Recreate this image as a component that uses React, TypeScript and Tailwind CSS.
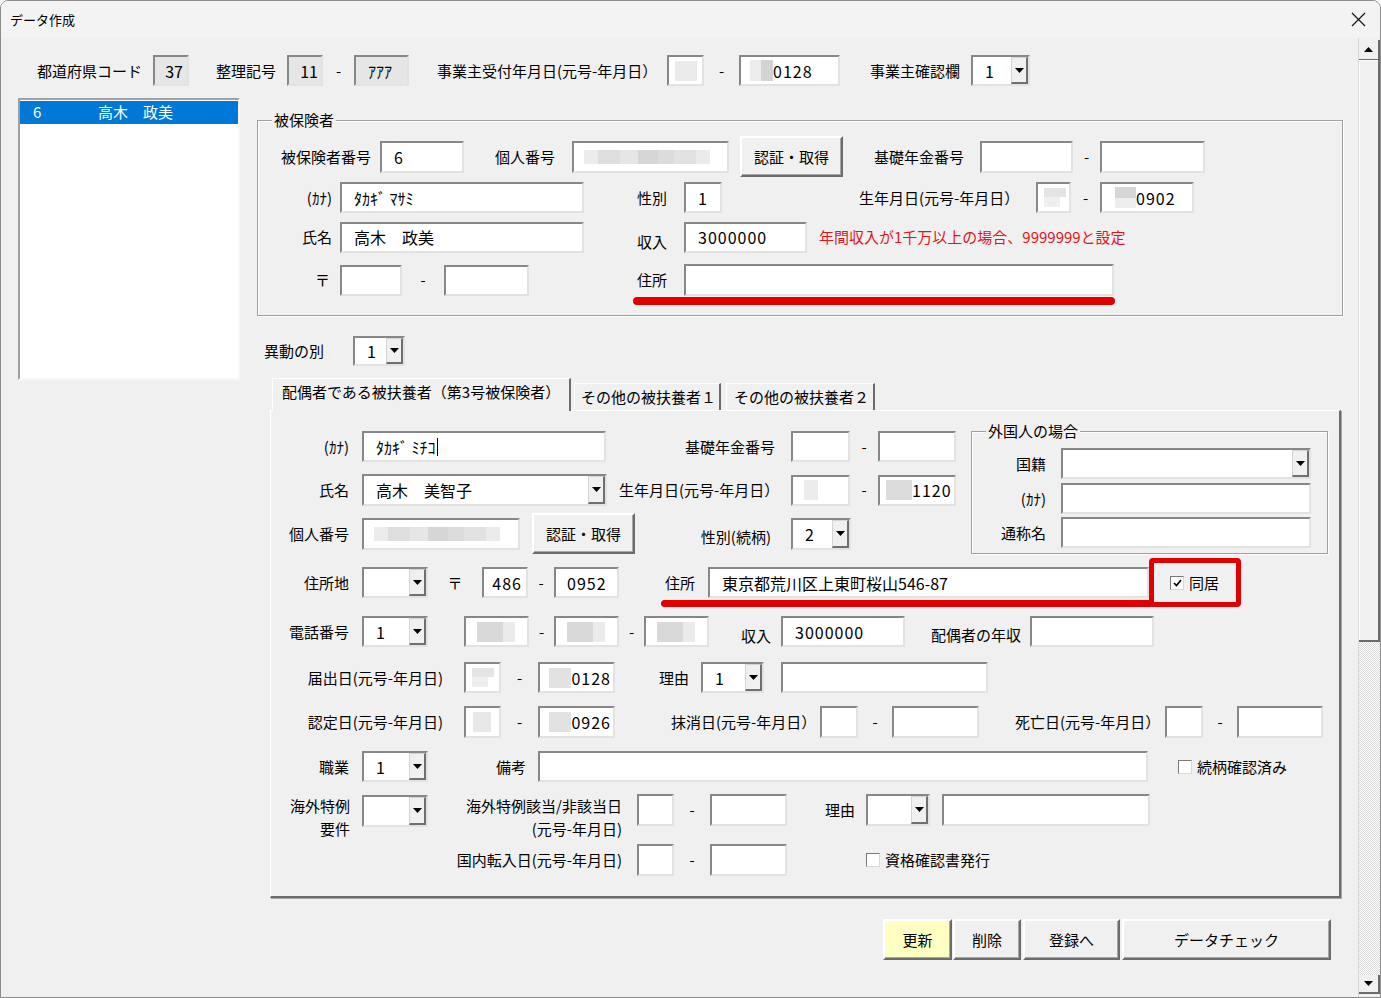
import React from 'react';

type P = { c?: string; children?: React.ReactNode };

function L({ c = '', children }: P) {
  return <div className={`shrink-0 whitespace-nowrap text-[15px] leading-[20px] ${c}`}>{children}</div>;
}

function Dash({ c = '' }: { c?: string }) {
  return <div className={`shrink-0 text-center text-[15px] leading-[20px] ${c}`}>-</div>;
}

function Field({ c = '', gray = false, children }: P & { gray?: boolean }) {
  return (
    <div
      className={`flex shrink-0 items-center overflow-hidden whitespace-nowrap border-2 border-t-[#878787] border-l-[#878787] border-r-[#e2e2e2] border-b-[#e2e2e2] text-[16px] leading-[20px] ${c.includes('h-[') ? '' : 'h-[31px]'} ${gray ? 'bg-[#e6e6e6]' : 'bg-white'} ${c}`}
    >
      {children}
    </div>
  );
}

function Tri({ up = false }: { up?: boolean }) {
  return (
    <svg width="9" height="5" viewBox="0 0 9 5">
      <path d={up ? 'M0 5h9L4.5 0z' : 'M0 0h9L4.5 5z'} fill="#000" />
    </svg>
  );
}

function Combo({ c = '', v = '' }: { c?: string; v?: string }) {
  return (
    <Field c={c}>
      <span className="flex-1 pl-[12px]">{v}</span>
      <span className="flex h-full w-[17px] shrink-0 items-center justify-center border-l border-t border-l-[#d4d4d4] border-t-[#d4d4d4] border-r-2 border-b-2 border-r-[#6f6f6f] border-b-[#6f6f6f] bg-[#f0f0f0]">
        <Tri />
      </span>
    </Field>
  );
}

function Btn({ c = '', children }: P) {
  return (
    <div className={`flex shrink-0 items-center justify-center border-2 border-t-white border-l-white border-r-[#6b6b6b] border-b-[#6b6b6b] text-[15px] leading-[20px] shadow-[inset_-1px_-1px_0_#a8a8a8] ${c}`}>
      {children}
    </div>
  );
}

function Check({ c = '', on = false, children }: P & { on?: boolean }) {
  return (
    <div className={`flex shrink-0 items-center gap-[5px] text-[15px] leading-[20px] ${c}`}>
      <span className="flex h-[14px] w-[14px] items-center justify-center border border-t-[#7a7a7a] border-l-[#7a7a7a] border-r-[#d8d8d8] border-b-[#d8d8d8] bg-white">
        {on && (
          <svg width="9" height="8" viewBox="0 0 9 8">
            <path d="M1 4l2.5 2.5L8 1" stroke="#000" strokeWidth="1.7" fill="none" />
          </svg>
        )}
      </span>
      {children}
    </div>
  );
}

function Frame({ c = '', title, children }: P & { title: string }) {
  return (
    <div className={`relative shrink-0 border border-[#a0a0a0] shadow-[inset_1px_1px_0_#ffffff,1px_1px_0_#ffffff] ${c}`}>
      <span className="absolute left-[14px] top-[-11px] bg-[#f0f0f0] px-[2px] text-[15px] leading-[20px]">{title}</span>
      {children}
    </div>
  );
}

// pixelated (masked) content inside inputs
function Smudge({ c = '' }: { c?: string }) {
  return <span className={`block shrink-0 ${c}`} />;
}

function DateHead() {
  return (
    <div className="ml-[6px] flex flex-col">
      <Smudge c="h-[9px] w-[22px] bg-[#e4e4e4]" />
      <Smudge c="h-[10px] w-[16px] bg-[#efefef]" />
    </div>
  );
}

function MyNumber() {
  return (
    <div className="ml-[10px] flex h-[14px]">
      <Smudge c="w-[14px] bg-[#ececec]" />
      <Smudge c="w-[22px] bg-[#dedede]" />
      <Smudge c="w-[18px] bg-[#e6e6e6]" />
      <Smudge c="w-[20px] bg-[#d6d6d6]" />
      <Smudge c="w-[16px] bg-[#dcdcdc]" />
      <Smudge c="w-[22px] bg-[#e2e2e2]" />
      <Smudge c="w-[14px] bg-[#ebebeb]" />
    </div>
  );
}

function Phone() {
  return (
    <div className="ml-[11px] flex h-[20px]">
      <Smudge c="w-[26px] bg-[#d9d9d9]" />
      <Smudge c="w-[12px] bg-[#ebebeb]" />
    </div>
  );
}

export default function App() {
  return (
    <div className="h-[998px] w-[1381px] overflow-hidden rounded-t-[8px] border border-[#8c8c8c] bg-[#f0f0f0] font-['Noto_Sans_CJK_JP','Noto_Sans',sans-serif] text-black">
      {/* title bar */}
      <div className="flex h-[37px] items-center justify-between bg-[#f3f3f3]">
        <span className="pl-[9px] text-[13px]">データ作成</span>
        <svg className="mr-[14px]" width="15" height="15" viewBox="0 0 15 15">
          <path d="M1 1l13 13M14 1L1 14" stroke="#1a1a1a" strokeWidth="1.3" />
        </svg>
      </div>

      <div className="flex h-[959px]">
        <div className="w-[1357px] shrink-0">
          {/* header row */}
          <div className="mt-[17px] flex h-[31px] items-center">
            <L c="ml-[36px] w-[105px]">都道府県コード</L>
            <Field gray c="ml-[11px] w-[36px] justify-end pr-[4px]">37</Field>
            <L c="ml-[27px] w-[60px]">整理記号</L>
            <Field gray c="ml-[11px] w-[36px] justify-end pr-[3px]">11</Field>
            <Dash c="w-[31px]" />
            <Field gray c="w-[55px] pl-[12px] text-[14px]">ｱｱｱ</Field>
            <L c="ml-[28px] w-[214px]">事業主受付年月日(元号-年月日）</L>
            <Field c="ml-[16px] w-[37px]">
              <Smudge c="ml-[6px] h-[20px] w-[22px] bg-[#ebebeb]" />
            </Field>
            <Dash c="w-[35px]" />
            <Field c="w-[101px]">
              <Smudge c="ml-[9px] h-[21px] w-[11px] bg-[#ededed]" />
              <Smudge c="h-[21px] w-[12px] bg-[#d3d3d3]" />
              <span className="tracking-[1px]">0128</span>
            </Field>
            <L c="ml-[30px] w-[90px]">事業主確認欄</L>
            <Combo c="ml-[11px] w-[59px]" v="1" />
          </div>

          <div className="mt-[12px] flex items-start">
            {/* list */}
            <div className="ml-[17px] h-[282px] w-[222px] shrink-0 border-2 border-t-[#a0a0a0] border-l-[#a0a0a0] border-r-[#f7f7f7] border-b-[#f7f7f7] bg-white">
              <div className="mt-[1px] flex h-[23px] items-center bg-[#0078d7] text-[15px] text-white">
                <span className="w-[78px] pl-[13px]">6</span>
                <span>高木　政美</span>
              </div>
            </div>

            {/* right side */}
            <div className="ml-[17px] w-[1100px] shrink-0">
              <Frame c="mt-[22px] h-[196px] w-[1086px]" title="被保険者">
                <div className="mt-[15px] flex h-[41px] items-center">
                  <L c="ml-[23px] w-[90px]">被保険者番号</L>
                  <Field c="ml-[9px] h-[32px] w-[84px] pl-[12px]">6</Field>
                  <L c="ml-[31px] w-[60px]">個人番号</L>
                  <Field c="ml-[17px] h-[32px] w-[157px]">
                    <MyNumber />
                  </Field>
                  <Btn c="ml-[11px] h-[41px] w-[103px]">認証・取得</Btn>
                  <L c="ml-[31px] w-[90px]">基礎年金番号</L>
                  <Field c="ml-[16px] h-[32px] w-[93px]" />
                  <Dash c="w-[27px]" />
                  <Field c="h-[32px] w-[105px]" />
                </div>
                <div className="mt-[5px] flex h-[31px] items-center">
                  <L c="w-[74px] text-right">(ｶﾅ)</L>
                  <Field c="ml-[8px] w-[244px] pl-[12px] text-[15px]">ﾀｶｷﾞ ﾏｻﾐ</Field>
                  <L c="ml-[53px] w-[30px]">性別</L>
                  <Field c="ml-[17px] w-[38px] pl-[12px]">1</Field>
                  <L c="ml-[137px] w-[155px]">生年月日(元号-年月日）</L>
                  <Field c="ml-[22px] w-[35px]">
                    <DateHead />
                  </Field>
                  <Dash c="w-[29px]" />
                  <Field c="w-[94px]">
                    <div className="ml-[13px] flex flex-col">
                      <Smudge c="h-[11px] w-[21px] bg-[#d6d6d6]" />
                      <Smudge c="h-[10px] w-[21px] bg-[#eeeeee]" />
                    </div>
                    <span className="tracking-[1px]">0902</span>
                  </Field>
                </div>
                <div className="mt-[8px] flex h-[32px] items-center">
                  <L c="w-[74px] text-right">氏名</L>
                  <Field c="ml-[8px] w-[244px] pl-[12px]">高木　政美</Field>
                  <L c="ml-[53px] mt-[10px] w-[30px]">収入</L>
                  <Field c="ml-[17px] w-[123px] pl-[12px] tracking-[1px]">3000000</Field>
                  <L c="ml-[12px] text-[#e3141c]">年間収入が1千万以上の場合、9999999と設定</L>
                </div>
                <div className="mt-[11px] flex h-[32px] items-center">
                  <L c="w-[74px] pr-[2px] text-right">〒</L>
                  <Field c="ml-[8px] w-[62px]" />
                  <Dash c="w-[42px]" />
                  <Field c="w-[85px]" />
                  <div className="relative ml-[108px] flex items-center">
                    <L c="w-[30px]">住所</L>
                    <Field c="ml-[17px] h-[32px] w-[430px]" />
                    <span className="absolute left-[-4px] top-[33px] h-[8px] w-[482px] rounded-full bg-[#e00000]" />
                  </div>
                </div>
              </Frame>

              <div className="mt-[20px] flex h-[30px] items-center">
                <L c="ml-[7px] w-[60px]">異動の別</L>
                <Combo c="ml-[29px] h-[30px] w-[52px]" v="1" />
              </div>

              {/* tabs */}
              <div className="mt-[12px] flex h-[32px] items-end">
                <div className="relative z-10 -mb-[1px] ml-[15px] flex h-[33px] w-[299px] items-start border-l border-t border-l-white border-t-white border-r-2 border-r-[#6b6b6b] bg-[#f0f0f0] pl-[9px] pt-[3px] text-[15px] leading-[20px]">
                  配偶者である被扶養者（第3号被保険者）
                </div>
                <div className="ml-[3px] flex h-[27px] w-[147px] items-center border-l border-t border-l-white border-t-white border-r-2 border-r-[#6b6b6b] pl-[6px] text-[15px]">
                  その他の被扶養者１
                </div>
                <div className="ml-[5px] flex h-[27px] w-[149px] items-center border-l border-t border-l-white border-t-white border-r-2 border-r-[#6b6b6b] pl-[7px] text-[15px]">
                  その他の被扶養者２
                </div>
              </div>

              <div className="ml-[13px] h-[488px] w-[1071px] border-l border-t border-l-white border-t-white border-r-2 border-b-2 border-r-[#6b6b6b] border-b-[#6b6b6b] shadow-[1px_1px_0_#a8a8a8]">
                <div className="flex items-start">
                  <div className="w-[685px] shrink-0">
                    <div className="mt-[20px] flex h-[31px] items-center">
                      <L c="w-[78px] text-right">(ｶﾅ)</L>
                      <Field c="ml-[13px] w-[244px] pl-[12px] text-[15px]">
                        ﾀｶｷﾞ ﾐﾁｺ<span className="ml-[1px] inline-block h-[18px] w-[1px] bg-black" />
                      </Field>
                      <L c="ml-[79px] w-[90px]">基礎年金番号</L>
                      <Field c="ml-[16px] w-[59px]" />
                      <Dash c="w-[28px]" />
                      <Field c="w-[78px]" />
                    </div>
                    <div className="mt-[12px] flex h-[32px] items-center">
                      <L c="w-[78px] text-right">氏名</L>
                      <Combo c="ml-[13px] h-[32px] w-[245px]" v="高木　美智子" />
                      <L c="ml-[12px] w-[156px]">生年月日(元号-年月日）</L>
                      <Field c="ml-[16px] w-[59px]">
                        <Smudge c="ml-[11px] h-[20px] w-[14px] bg-[#ececec]" />
                      </Field>
                      <Dash c="w-[28px]" />
                      <Field c="w-[78px]">
                        <Smudge c="ml-[6px] h-[20px] w-[26px] bg-[#dcdcdc]" />
                        <span className="tracking-[1px]">1120</span>
                      </Field>
                    </div>
                    <div className="mt-[7px] flex h-[41px] items-center">
                      <L c="w-[78px] text-right">個人番号</L>
                      <Field c="ml-[13px] h-[32px] w-[158px]">
                        <MyNumber />
                      </Field>
                      <Btn c="ml-[12px] h-[41px] w-[103px]">認証・取得</Btn>
                      <L c="mt-[6px] w-[136px] text-right">性別(続柄)</L>
                      <Combo c="ml-[20px] h-[32px] w-[60px]" v="2" />
                    </div>
                  </div>

                  <Frame c="ml-[15px] mt-[20px] h-[123px] w-[357px]" title="外国人の場合">
                    <div className="mt-[16px] flex h-[31px] items-center">
                      <L c="w-[74px] text-right">国籍</L>
                      <Combo c="ml-[15px] w-[250px]" />
                    </div>
                    <div className="mt-[4px] flex h-[31px] items-center">
                      <L c="w-[74px] text-right">(ｶﾅ)</L>
                      <Field c="ml-[15px] w-[250px]" />
                    </div>
                    <div className="mt-[3px] flex h-[31px] items-center">
                      <L c="w-[74px] text-right">通称名</L>
                      <Field c="ml-[15px] w-[250px]" />
                    </div>
                  </Frame>
                </div>

                {/* 住所地 */}
                <div className="mt-[4px] flex h-[49px] items-center">
                  <L c="w-[78px] text-right">住所地</L>
                  <Combo c="ml-[13px] w-[66px]" />
                  <L c="w-[54px] text-center">〒</L>
                  <Field c="w-[46px] justify-end pr-[4px] tracking-[1px]">486</Field>
                  <Dash c="w-[26px]" />
                  <Field c="w-[65px] pl-[11px] tracking-[1px]">0952</Field>
                  <div className="relative ml-[46px] flex items-center">
                    <L c="w-[30px]">住所</L>
                    <Field c="ml-[13px] w-[441px] pl-[12px]">東京都荒川区上東町桜山546-87</Field>
                    <span className="absolute left-[-4px] top-[33px] h-[7px] w-[490px] rounded-l-full bg-[#e00000]" />
                  </div>
                  <div className="flex h-[49px] w-[92px] shrink-0 items-center rounded-[4px] border-[5px] border-[#e00000]">
                    <Check on c="ml-[16px]">同居</Check>
                  </div>
                </div>

                {/* 電話番号 */}
                <div className="mt-[9px] flex h-[31px] items-center">
                  <L c="w-[78px] text-right">電話番号</L>
                  <Combo c="ml-[13px] w-[66px]" v="1" />
                  <Field c="ml-[36px] w-[65px]">
                    <Phone />
                  </Field>
                  <Dash c="w-[25px]" />
                  <Field c="w-[65px]">
                    <Phone />
                  </Field>
                  <Dash c="w-[25px]" />
                  <Field c="w-[65px]">
                    <Phone />
                  </Field>
                  <L c="ml-[32px] mt-[8px] w-[30px]">収入</L>
                  <Field c="ml-[10px] w-[124px] pl-[12px] tracking-[1px]">3000000</Field>
                  <L c="ml-[26px] mt-[6px] w-[90px]">配偶者の年収</L>
                  <Field c="ml-[9px] w-[124px]" />
                </div>

                {/* 届出日 */}
                <div className="mt-[15px] flex h-[31px] items-center">
                  <L c="w-[172px] text-right">届出日(元号-年月日)</L>
                  <Field c="ml-[21px] w-[37px]">
                    <DateHead />
                  </Field>
                  <Dash c="w-[37px]" />
                  <Field c="w-[77px] justify-end pr-[2px]">
                    <Smudge c="h-[20px] w-[22px] bg-[#e2e2e2]" />
                    <span className="tracking-[1px]">0128</span>
                  </Field>
                  <L c="ml-[44px] w-[30px]">理由</L>
                  <Combo c="ml-[12px] w-[63px]" v="1" />
                  <Field c="ml-[17px] w-[207px]" />
                </div>

                {/* 認定日 */}
                <div className="mt-[13px] flex h-[32px] items-center">
                  <L c="w-[172px] text-right">認定日(元号-年月日)</L>
                  <Field c="ml-[21px] h-[32px] w-[37px]">
                    <Smudge c="ml-[7px] h-[20px] w-[18px] bg-[#e8e8e8]" />
                  </Field>
                  <Dash c="w-[37px]" />
                  <Field c="h-[32px] w-[77px] justify-end pr-[2px]">
                    <Smudge c="h-[20px] w-[22px] bg-[#e2e2e2]" />
                    <span className="tracking-[1px]">0926</span>
                  </Field>
                  <L c="ml-[56px] w-[141px]">抹消日(元号-年月日）</L>
                  <Field c="ml-[8px] h-[32px] w-[38px]" />
                  <Dash c="w-[34px]" />
                  <Field c="h-[32px] w-[87px]" />
                  <L c="ml-[36px] w-[140px]">死亡日(元号-年月日）</L>
                  <Field c="ml-[10px] h-[32px] w-[38px]" />
                  <Dash c="w-[34px]" />
                  <Field c="h-[32px] w-[86px]" />
                </div>

                {/* 職業 */}
                <div className="mt-[13px] flex h-[31px] items-center">
                  <L c="w-[78px] text-right">職業</L>
                  <Combo c="ml-[13px] w-[66px]" v="1" />
                  <L c="ml-[68px] w-[30px]">備考</L>
                  <Field c="ml-[12px] w-[610px]" />
                  <Check c="ml-[30px]">続柄確認済み</Check>
                </div>

                {/* 海外特例 */}
                <div className="mt-[12px] flex h-[46px] items-start">
                  <L c="w-[79px] text-right leading-[23px]">
                    海外特例
                    <br />
                    要件
                  </L>
                  <Combo c="ml-[12px] mt-[1px] h-[32px] w-[66px]" />
                  <L c="w-[194px] text-right leading-[23px]">
                    海外特例該当/非該当日
                    <br />
                    (元号-年月日)
                  </L>
                  <Field c="ml-[15px] h-[32px] w-[37px]" />
                  <Dash c="flex h-[32px] w-[36px] items-center justify-center" />
                  <Field c="h-[32px] w-[77px]" />
                  <L c="ml-[38px] flex h-[32px] w-[30px] items-center">理由</L>
                  <Combo c="ml-[11px] h-[32px] w-[64px]" />
                  <Field c="ml-[12px] h-[32px] w-[208px]" />
                </div>

                {/* 国内転入日 */}
                <div className="mt-[4px] flex h-[32px] items-center">
                  <L c="w-[351px] text-right">国内転入日(元号-年月日)</L>
                  <Field c="ml-[15px] h-[32px] w-[37px]" />
                  <Dash c="w-[36px]" />
                  <Field c="h-[32px] w-[77px]" />
                  <Check c="ml-[79px]">資格確認書発行</Check>
                </div>
              </div>

              {/* buttons */}
              <div className="mt-[21px] flex h-[41px]">
                <Btn c="ml-[626px] h-[41px] w-[69px] bg-[#ffffc4]">更新</Btn>
                <Btn c="ml-[1px] h-[41px] w-[68px]">削除</Btn>
                <Btn c="ml-[2px] h-[41px] w-[97px]">登録へ</Btn>
                <Btn c="ml-[2px] h-[41px] w-[209px]">データチェック</Btn>
              </div>
            </div>
          </div>
        </div>

        {/* vertical scroll bar */}
        <div className="flex w-[22px] shrink-0 flex-col border-l border-l-[#d8d8d8] bg-[#f0f0f0]">
          <div className="mt-[2px] flex h-[19px] items-center justify-center border-r-2 border-r-[#6b6b6b]">
            <Tri up />
          </div>
          <div className="h-[583px] border-t border-t-[#6b6b6b] border-b-2 border-b-[#6b6b6b] border-r-2 border-r-[#6b6b6b] shadow-[inset_1px_1px_0_#ffffff]" />
          <div className="flex-1 bg-[image:repeating-conic-gradient(#dadada_0%_25%,#ffffff_0%_50%)] bg-[length:2px_2px]" />
          <div className="mb-[3px] flex h-[19px] items-center justify-center border-r-2 border-b-2 border-r-[#6b6b6b] border-b-[#6b6b6b] bg-[#f0f0f0]">
            <Tri />
          </div>
        </div>
      </div>
    </div>
  );
}
